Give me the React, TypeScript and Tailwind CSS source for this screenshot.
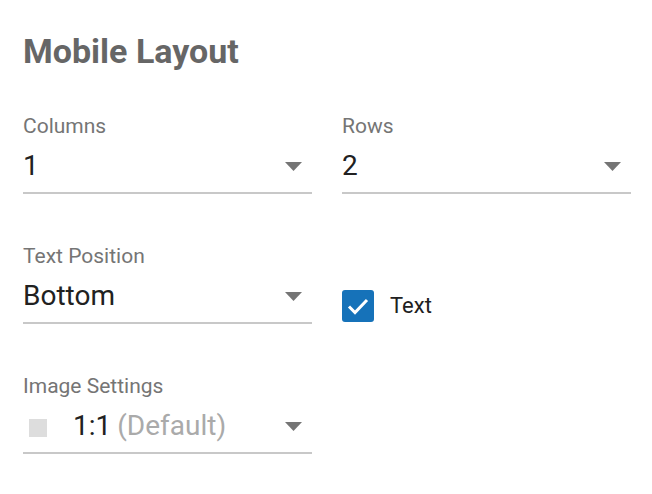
const font = { fontFamily: "Roboto, 'Liberation Sans', sans-serif" };

const Arrow = () => (
    <svg width="17" height="9" viewBox="0 0 17 9" className="shrink-0">
        <path d="M0 0 H17 L8.5 9 Z" fill="#757575" />
    </svg>
);

type SelectProps = {
    label: string;
    children: React.ReactNode;
};

const SelectField = ({ label, children }: SelectProps) => (
    <div className="flex flex-col">
        <span className="h-6 text-[21px] leading-6 text-[#757575]">{label}</span>
        <div className="mt-3 flex h-8 items-center justify-between border-b-2 border-[#c8c8c8] pb-[10px] pr-[10px] box-content">
            <div className="flex items-center text-[28px] leading-8 text-[#212121]">
                {children}
            </div>
            <Arrow />
        </div>
    </div>
);

export default function App() {
    return (
        <main
            className="h-[494px] w-[652px] bg-white pl-[23px] pr-[21px] pt-[31px]"
            style={font}
        >
            <h1 className="h-10 text-[34px] font-bold leading-10 text-[#666666]">
                Mobile Layout
            </h1>

            <section className="mt-[43px] grid grid-cols-2 gap-x-[30px] gap-y-[50px]">
                <SelectField label="Columns">1</SelectField>
                <SelectField label="Rows">2</SelectField>

                <SelectField label="Text Position">Bottom</SelectField>
                <label className="flex items-end pb-[2px]">
                    <span className="flex h-8 w-8 items-center justify-center rounded-[3px] bg-[#1672b9]">
                        <svg width="32" height="32" viewBox="0 0 32 32">
                            <path
                                d="M7 16.5 L13 22.5 L25 10"
                                fill="none"
                                stroke="white"
                                strokeWidth="3"
                            />
                        </svg>
                    </span>
                    <span className="ml-4 pb-[3px] text-[22px] leading-[26px] text-[#212121]">
                        Text
                    </span>
                </label>

                <SelectField label="Image Settings">
                    <span className="ml-[6px] mt-1 h-[18px] w-[18px] bg-[#dddddd]" />
                    <span className="ml-[26px]">1:1</span>
                    <span className="ml-[6px] text-[#aaaaaa]">(Default)</span>
                </SelectField>
            </section>
        </main>
    );
}
